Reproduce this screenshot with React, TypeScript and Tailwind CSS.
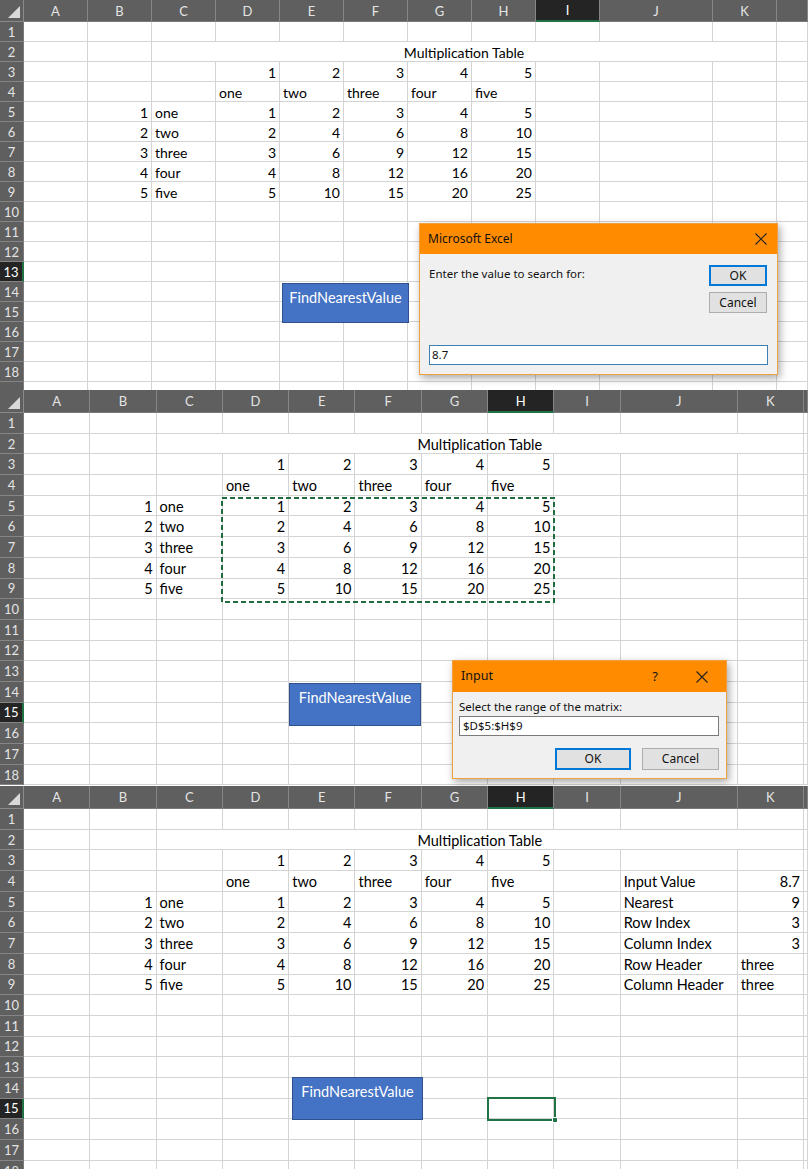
import React from 'react';

const COLS = ['A', 'B', 'C', 'D', 'E', 'F', 'G', 'H', 'I', 'J', 'K', 'L'];
const NAMES = ['one', 'two', 'three', 'four', 'five'];
const SIDE = [
  ['Input Value', '8.7', 'r'],
  ['Nearest', '9', 'r'],
  ['Row Index', '3', 'r'],
  ['Column Index', '3', 'r'],
  ['Row Header', 'three', 'l'],
  ['Column Header', 'three', 'l'],
];

type Cell = { t: string; right: boolean } | null;

function cellAt(col: string, row: number, withResult: boolean): Cell {
  const ci = COLS.indexOf(col);
  const d = ci - 3; // D = 0
  if (row === 3 && d >= 0 && d < 5) return { t: String(d + 1), right: true };
  if (row === 4 && d >= 0 && d < 5) return { t: NAMES[d], right: false };
  if (row >= 5 && row <= 9) {
    const n = row - 4;
    if (col === 'B') return { t: String(n), right: true };
    if (col === 'C') return { t: NAMES[n - 1], right: false };
    if (d >= 0 && d < 5) return { t: String(n * (d + 1)), right: true };
  }
  if (withResult && row >= 4 && row <= 9) {
    const s = SIDE[row - 4];
    if (col === 'J') return { t: s[0], right: false };
    if (col === 'K') return { t: s[1], right: s[2] === 'r' };
  }
  return null;
}

const SMALL = {
  grid: 'grid-cols-[24px_64px_64px_64px_64px_64px_64px_64px_64px_64px_113px_64px_1fr] grid-rows-[22px_repeat(19,20px)]',
  text: 'text-[14px]',
};
const LARGE = {
  grid: 'grid-cols-[24px_66.3px_66.3px_66.3px_66.3px_66.3px_66.3px_66.3px_66.3px_66.3px_117px_66.3px_1fr] grid-rows-[23px_repeat(18,20.7px)]',
  text: 'text-[14.5px]',
};

interface SheetProps {
  size: typeof SMALL;
  rows: number;
  labelled: number;
  selCol: string;
  selRow: number;
  withResult?: boolean;
  height: string;
  children?: React.ReactNode;
}

const Sheet: React.FC<SheetProps> = ({ size, rows, labelled, selCol, selRow, withResult = false, height, children }) => {
  const body = (c: Cell, key: string, extra = '') => (
    <div
      key={key}
      className={`flex items-center border-r border-b border-[#d4d4d4] bg-white overflow-visible whitespace-nowrap pt-[2px] ${extra} ${
        c && c.right ? 'justify-end pr-[3px]' : 'justify-start pl-[3px]'
      }`}
    >
      {c ? c.t : ''}
    </div>
  );

  const cells: React.ReactNode[] = [];
  cells.push(
    <div key="corner" className="relative bg-[#5f5f5f] border-r border-b border-[#8a8a8a]">
      <svg className="absolute right-[3px] bottom-[3px]" width="12" height="12" viewBox="0 0 12 12">
        <polygon points="12,0 12,12 0,12" fill="#d9d9d9" />
      </svg>
    </div>
  );
  COLS.forEach((c) => {
    const sel = c === selCol;
    cells.push(
      <div
        key={`h${c}`}
        className={`flex items-center justify-center border-r border-[#858585] text-[13px] ${
          sel ? 'bg-[#242424] text-white border-b-2 border-b-[#217346]' : 'bg-[#5f5f5f] text-[#e4e4e4] border-b border-b-[#7a7a7a]'
        }`}
      >
        {c === 'L' ? '' : c}
      </div>
    );
  });
  for (let r = 1; r <= rows; r++) {
    const sel = r === selRow;
    cells.push(
      <div
        key={`r${r}`}
        className={`flex items-center justify-center border-b border-[#858585] text-[13px] ${
          sel ? 'bg-[#242424] text-white border-r-2 border-r-[#217346]' : 'bg-[#5f5f5f] text-[#e4e4e4] border-r border-r-[#7a7a7a]'
        }`}
      >
        {r <= labelled ? r : ''}
      </div>
    );
    if (r === 2) {
      cells.push(body(null, 'A2'));
      cells.push(body(null, 'B2'));
      cells.push(
        <div key="title" className="col-span-9 flex items-center justify-center border-r border-b border-[#d4d4d4] bg-white pt-[2px]">
          Multiplication Table
        </div>
      );
      cells.push(body(null, 'L2'));
    } else {
      COLS.forEach((c) => cells.push(body(cellAt(c, r, withResult), `${c}${r}`)));
    }
  }

  return (
    <div className={`relative overflow-hidden ${height}`}>
      <div className={`grid ${size.grid} ${size.text} text-black font-['Lato',sans-serif] leading-[18px]`}>{cells}</div>
      <div className="font-['Noto_Sans',sans-serif]">{children}</div>
    </div>
  );
};

const MacroButton: React.FC<{ pos: string }> = ({ pos }) => (
  <div
    className={`absolute ${pos} flex justify-center pt-[5px] bg-[#4472c4] border border-[#2f528f] text-white text-[14.5px] leading-[18px] font-['Lato',sans-serif]`}
  >
    FindNearestValue
  </div>
);

const CloseX: React.FC = () => (
  <svg width="12" height="12" viewBox="0 0 12 12">
    <path d="M0.5 0.5 L11.5 11.5 M11.5 0.5 L0.5 11.5" stroke="#222" strokeWidth="1.1" fill="none" />
  </svg>
);

const ExcelPrompt: React.FC = () => (
  <div className="absolute left-[419px] top-[223px] w-[359px] border border-[#f0a040] bg-[#f0f0f0] shadow-[2px_3px_8px_rgba(0,0,0,0.35)] text-[11.5px] text-[#111]">
    <div className="h-[30px] bg-[#ff8c00] flex items-center justify-between pl-[8px] pr-[10px]">
      <span className="text-[12px]">Microsoft Excel</span>
      <CloseX />
    </div>
    <div className="px-[9px] pt-[11px] pb-[9px]">
      <div className="flex justify-between">
        <span className="leading-[16px] mt-[1px]">Enter the value to search for:</span>
        <div className="flex flex-col gap-[6px] mr-[1px]">
          <div className="w-[58px] h-[21px] border-2 border-[#0078d7] bg-[#e1e1e1] flex items-center justify-center text-[12px]">OK</div>
          <div className="w-[58px] h-[21px] border border-[#adadad] bg-[#e1e1e1] flex items-center justify-center text-[12px]">Cancel</div>
        </div>
      </div>
      <div className="mt-[32px] h-[20px] border border-[#3c7fb1] bg-white flex items-center px-[2px] text-[11.5px]">8.7</div>
    </div>
  </div>
);

const RangePrompt: React.FC = () => (
  <div className="absolute left-[452px] top-[270px] w-[275px] border border-[#f0a040] bg-[#f0f0f0] shadow-[2px_3px_8px_rgba(0,0,0,0.35)] text-[11.5px] text-[#111]">
    <div className="h-[31px] bg-[#ff8c00] flex items-center pl-[8px] pr-[18px]">
      <span className="text-[12.5px] flex-1">Input</span>
      <span className="text-[13px] mr-[38px]">?</span>
      <CloseX />
    </div>
    <div className="px-[6px] pt-[7px] pb-[8px]">
      <div className="leading-[16px]">Select the range of the matrix:</div>
      <div className="mt-[1px] h-[20px] border border-[#7a7a7a] bg-white flex items-center px-[3px] mr-[1px]">$D$5:$H$9</div>
      <div className="mt-[12px] flex justify-end gap-[11px] mr-[1px]">
        <div className="w-[76px] h-[22px] border-2 border-[#0078d7] bg-[#e1e1e1] flex items-center justify-center text-[12px]">OK</div>
        <div className="w-[77px] h-[22px] border border-[#adadad] bg-[#e1e1e1] flex items-center justify-center text-[12px]">Cancel</div>
      </div>
    </div>
  </div>
);

const App: React.FC = () => {
  return (
    <div className="w-[808px] h-[1169px] overflow-hidden bg-white">
      <Sheet size={SMALL} rows={19} labelled={18} selCol="I" selRow={13} height="h-[390px]">
        <MacroButton pos="left-[282px] top-[283px] w-[127px] h-[40px]" />
        <ExcelPrompt />
      </Sheet>

      <Sheet size={LARGE} rows={18} labelled={18} selCol="H" selRow={15} height="h-[396px]">
        <svg className="absolute left-[221px] top-[107px]" width="334" height="106">
          <rect x="1" y="1" width="332" height="104" fill="none" stroke="#1f6b3d" strokeWidth="2" strokeDasharray="5 3" />
        </svg>
        <MacroButton pos="left-[289px] top-[293px] w-[132px] h-[43px]" />
        <RangePrompt />
      </Sheet>

      <Sheet size={LARGE} rows={18} labelled={18} selCol="H" selRow={15} withResult height="h-[383px]">
        <MacroButton pos="left-[292px] top-[291px] w-[131px] h-[43px]" />
        <div className="absolute left-[487px] top-[311px] w-[69px] h-[24px] border-2 border-[#217346]">
          <div className="absolute right-[-4px] bottom-[-4px] w-[6px] h-[6px] bg-[#217346] border border-white" />
        </div>
      </Sheet>
    </div>
  );
};

export default App;
